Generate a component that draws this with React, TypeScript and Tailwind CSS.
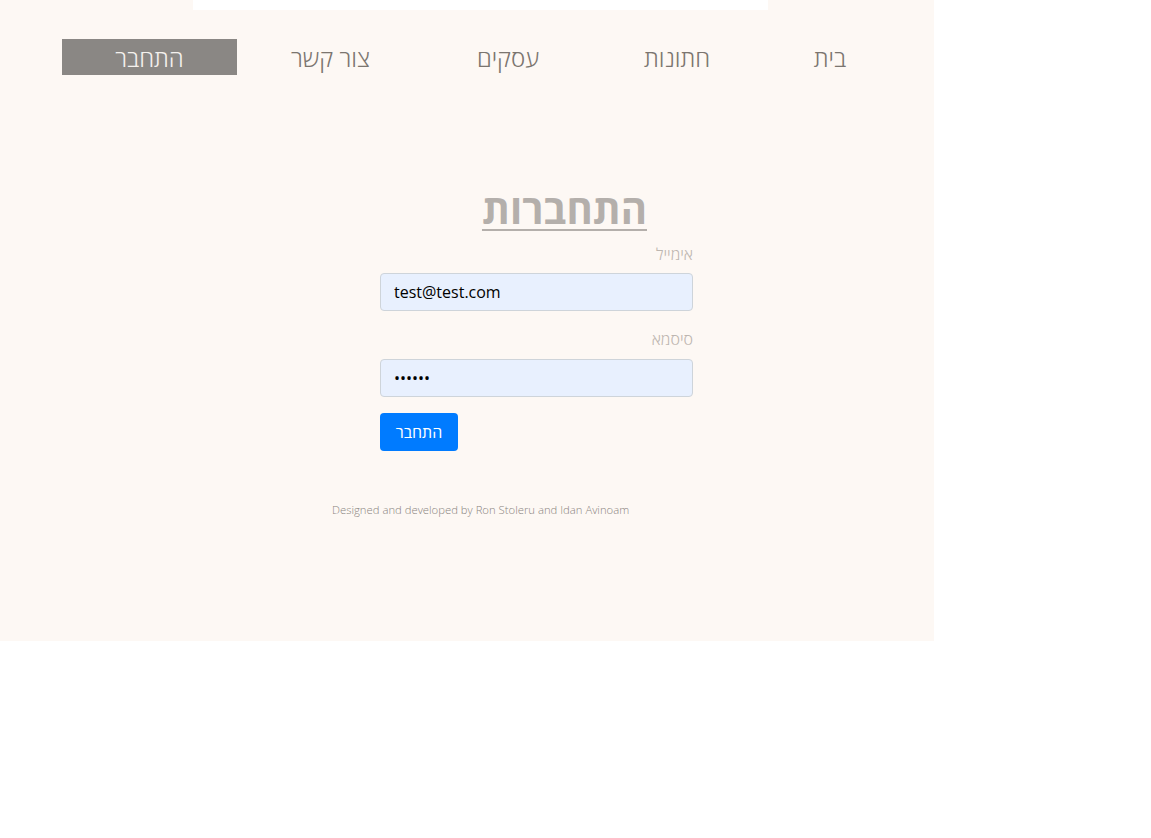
import React from 'react';

const navItems = [
  { label: 'בית', w: 'w-[136px]' },
  { label: 'חתונות', w: 'w-[170px]' },
  { label: 'עסקים', w: 'w-[168px]' },
  { label: 'צור קשר', w: 'w-[187px]' },
];

export default function App() {
  return (
    <div className="w-[934px] h-[641px] bg-[#fdf8f4] font-['Open_Sans','DejaVu_Sans',sans-serif]">
      {/* top image strip */}
      <div className="ml-[193px] w-[575px] h-[10px] bg-white" />

      {/* Nav */}
      <nav dir="rtl" className="flex items-center mt-[29px] pr-[36px] h-[36px]">
        {navItems.map((item) => (
          <a key={item.label} className={`${item.w} text-center h-[36px] leading-[38px] text-[24px] font-light text-[#7b756f] whitespace-nowrap`}>
            {item.label}
          </a>
        ))}
        <a className="w-[175px] text-center h-[36px] leading-[38px] text-[24px] font-light text-[#f4f1ee] bg-[#8a8784] whitespace-nowrap">
          התחבר
        </a>
      </nav>

      {/* Login form */}
      <div dir="rtl" className="ml-[380px] w-[313px] mt-[110px]">
        <h1 className="pr-[46px] text-[40px] leading-[48px] font-bold text-[#b4afab] underline underline-offset-[5px] decoration-2">
          התחברות
        </h1>
        <label className="block mt-[9px] text-[16px] leading-[24px] font-light text-[#bdb6b0]">אימייל</label>
        <input
          dir="ltr"
          readOnly
          value="test@test.com"
          className="block mt-[7px] w-full h-[38px] px-[13px] text-[16px] text-black bg-[#e8f0fe] border border-[#ced4da] rounded-[4px] outline-none"
        />
        <label className="block mt-[16px] text-[16px] leading-[24px] font-light text-[#bdb6b0]">סיסמא</label>
        <input
          dir="ltr"
          readOnly
          type="password"
          value="123456"
          className="block mt-[8px] w-full h-[38px] px-[13px] text-[16px] text-black bg-[#e8f0fe] border border-[#ced4da] rounded-[4px] outline-none"
        />
        <div className="flex justify-end mt-[16px]">
          <button className="w-[78px] h-[38px] text-[16px] text-white bg-[#007bff] rounded-[4px]">התחבר</button>
        </div>
      </div>

      {/* Footer */}
      <p className="mt-[51px] ml-[332px] w-[300px] whitespace-nowrap text-[11.3px] font-light text-[#8a847f]">
        Designed and developed by Ron Stoleru and Idan Avinoam
      </p>
    </div>
  );
}
